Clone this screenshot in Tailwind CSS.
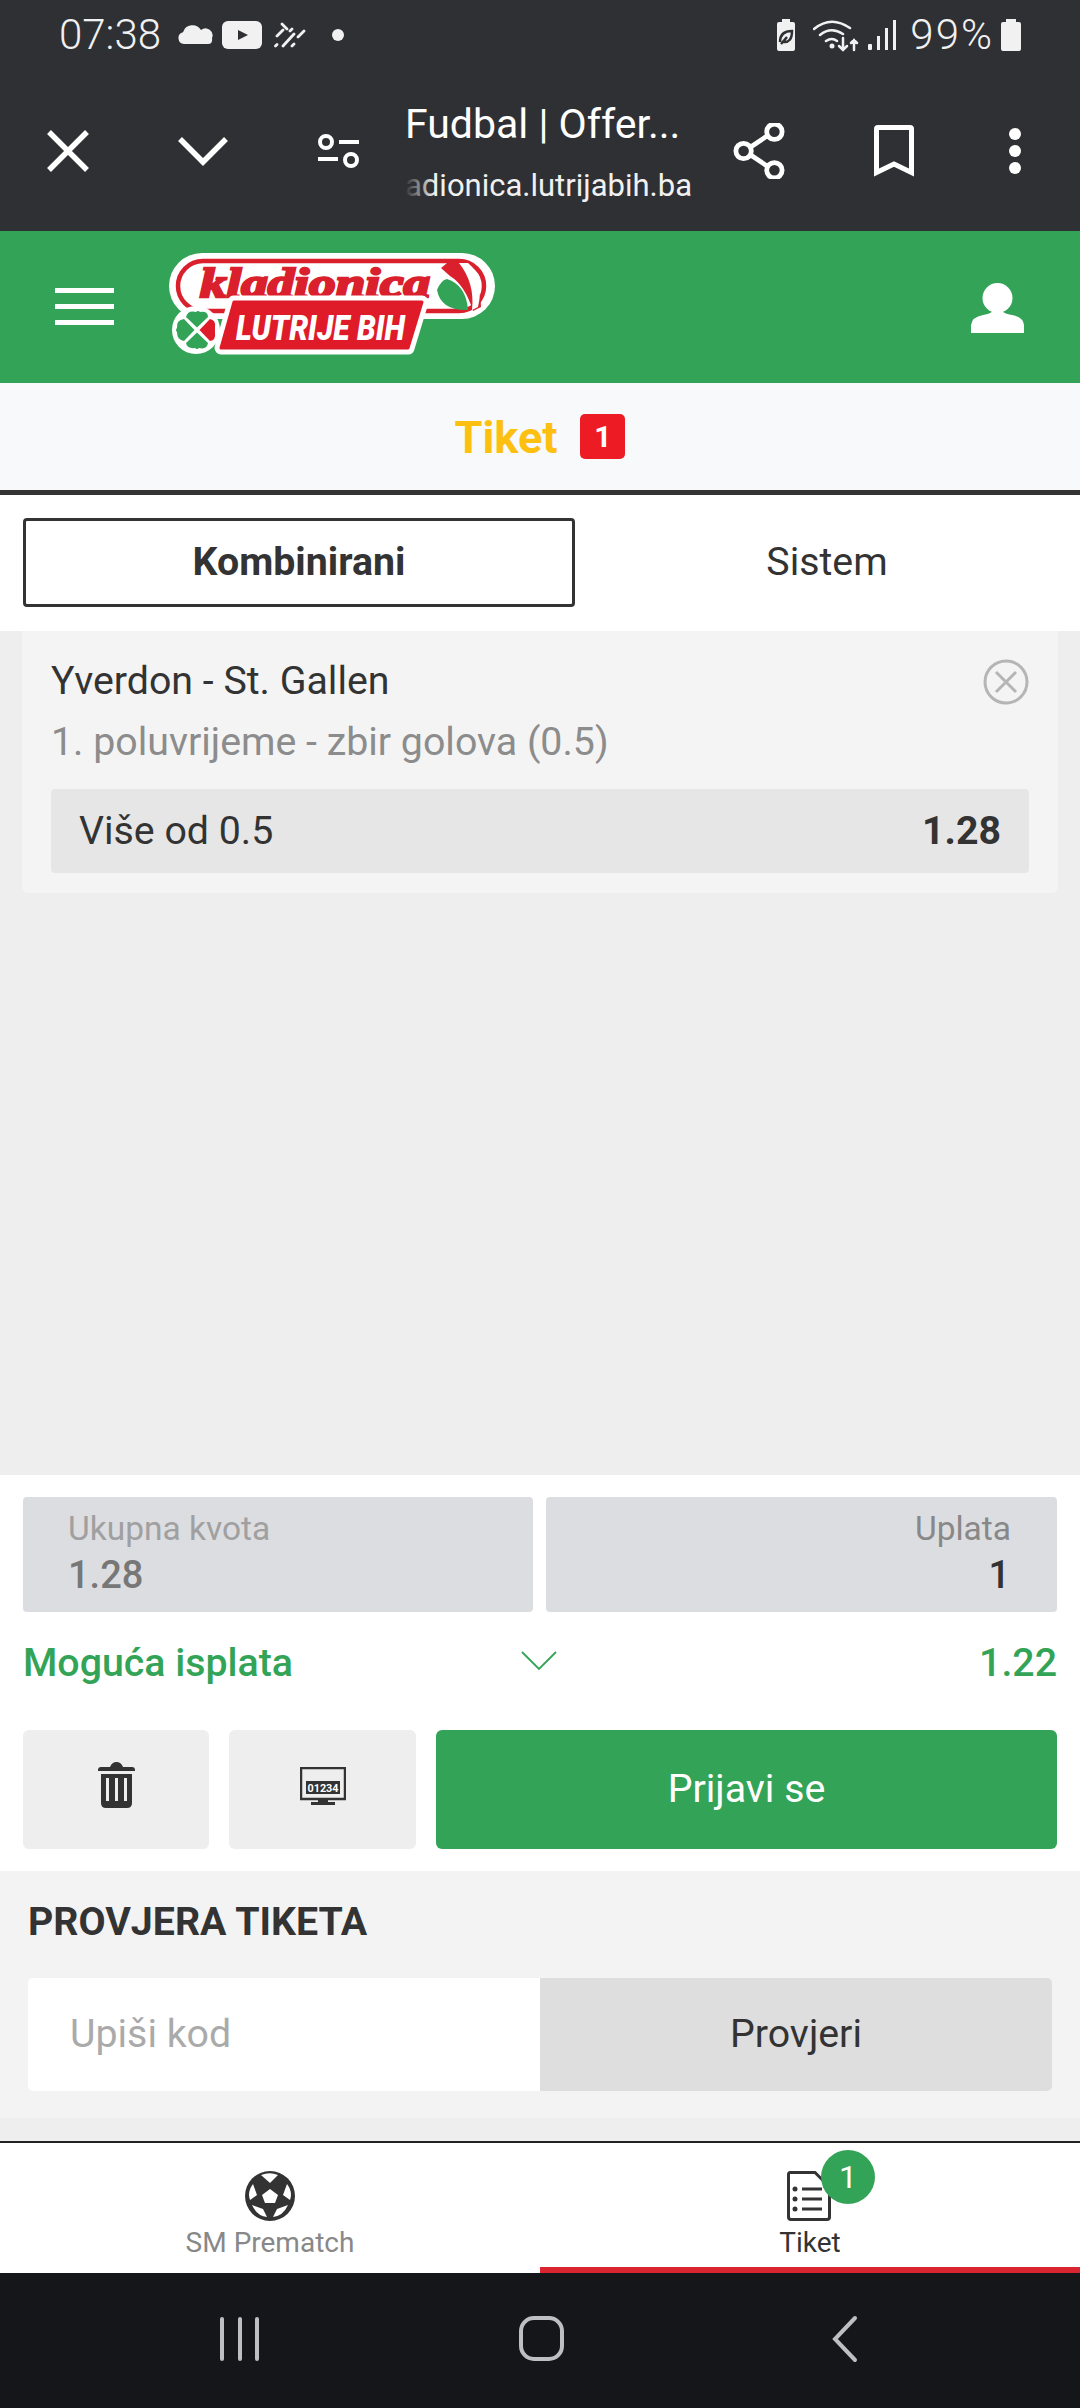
<!DOCTYPE html>
<html lang="en">
<head>
    <meta charset="UTF-8">
    <meta name="viewport" content="width=device-width, initial-scale=1.0">
    <title>Tiket - Kladionica Lutrije BiH</title>
    <script src="https://cdn.jsdelivr.net/npm/@tailwindcss/browser@4"></script>
</head>
<body class="bg-white">
<div class="w-[1080px] h-[2408px] flex flex-col overflow-hidden font-[Roboto,sans-serif] text-[39.3px] text-[#333]">

    <!-- Browser chrome -->
    <div class="h-[231px] bg-[#2f3034] text-white flex flex-col shrink-0">
        <!-- Status bar -->
        <div class="h-[70px] flex items-center pl-[59px] pr-[58px] text-[#f1f1f1] text-[42px]">
            <span class="w-[104px] font-light leading-none">07:38</span>
            <svg class="w-[38px] h-[22px] ml-[13px]" viewBox="0 0 38 22" fill="#f1f1f1"><path d="M8 20a6 6 0 0 1-1-11.800A10 10 0 0 1 25 6a7 7 0 0 1 11 8q1 6-4 6z"/></svg>
            <svg class="w-[40px] h-[28px] ml-[8px]" viewBox="0 0 40 28"><rect width="40" height="28" rx="6" fill="#f1f1f1"/><path d="M16 9l10 5-10 5z" fill="#2f3034"/></svg>
            <svg class="w-[32px] h-[26px] ml-[12px]" viewBox="0 0 32 26" fill="none" stroke="#f1f1f1" stroke-width="2.800" stroke-linecap="round"><path d="M8 2l5 5M3 14l6-6M1.500 24l1.500-1.500M9 24l11-12M18 24l2-2M24 15l6-6M16 9l2-2"/></svg>
            <span class="w-[12px] h-[12px] rounded-full bg-[#f1f1f1] ml-[26px]"></span>
            <div class="flex-1"></div>
            <svg class="w-[22px] h-[32px]" viewBox="0 0 22 32"><path d="M2 5a2 2 0 0 1 2-2h3V0h8v3h3a2 2 0 0 1 2 2v25a2 2 0 0 1-2 2H4a2 2 0 0 1-2-2z" fill="#f1f1f1"/><path d="M5 23q0-11 12-11 0 12-9 11M6 25l6-7" fill="none" stroke="#2f3034" stroke-width="2.500"/></svg>
            <svg class="w-[46px] h-[34px] ml-[16px]" viewBox="0 0 46 34" fill="none" stroke="#f1f1f1" stroke-width="2.500" stroke-linecap="round"><path d="M1 11q17-14 36-1M7 17q11-9 23-1M13 23q6-4 11 0"/><circle cx="19" cy="28" r="2.500" fill="#f1f1f1" stroke="none"/><path d="M30 20v12M26 28l4 4 4-4M41 32v-10M38 25l3-3 3 3"/></svg>
            <svg class="w-[28px] h-[30px] ml-[9px]" viewBox="0 0 28 30" fill="#f1f1f1"><rect x="0" y="24" width="4" height="6" rx="1"/><rect x="9" y="16" width="3" height="14"/><rect x="17" y="8" width="3" height="22"/><rect x="25" y="0" width="3" height="30"/></svg>
            <span class="ml-[14px] font-light leading-none tracking-[2px]">99%</span>
            <svg class="w-[22px] h-[32px] ml-[6px]" viewBox="0 0 22 32"><path d="M1 5a2 2 0 0 1 2-2h3V0h10v3h3a2 2 0 0 1 2 2v25a2 2 0 0 1-2 2H3a2 2 0 0 1-2-2z" fill="#f1f1f1"/></svg>
        </div>
        <!-- Custom tab toolbar -->
        <div class="flex-1 flex items-center">
            <div class="w-[135px] flex justify-center">
                <svg class="w-[42px] h-[42px]" viewBox="0 0 42 42" stroke="#fff" stroke-width="5.500"><path d="M2 2l38 38M40 2L2 40"/></svg>
            </div>
            <div class="w-[135px] flex justify-center">
                <svg class="w-[50px] h-[30px]" viewBox="0 0 50 30" fill="none" stroke="#fff" stroke-width="5.500"><path d="M2 3l23 23L48 3"/></svg>
            </div>
            <div class="w-[135px] flex justify-center">
                <svg class="w-[44px] h-[36px]" viewBox="0 0 44 36" fill="none" stroke="#fff" stroke-width="4"><circle cx="10" cy="9" r="6"/><path d="M23 9h20M2 26h20"/><circle cx="35" cy="27" r="6"/></svg>
            </div>
            <div class="w-[287px] flex flex-col relative">
                <span class="text-[41px] leading-[56px] text-white whitespace-nowrap">Fudbal | Offer...</span>
                <span class="text-[31px] leading-[40px] mt-[14px] text-[#f1f1f1] whitespace-nowrap">adionica.lutrijabih.ba</span>
                <span class="absolute left-0 bottom-0 w-[30px] h-[40px] bg-gradient-to-r from-[#2f3034] to-transparent"></span>
            </div>
            <div class="w-[135px] flex justify-center">
                <svg class="w-[52px] h-[56px] -ml-[2px]" viewBox="0 0 54 58" fill="none" stroke="#fff" stroke-width="5"><circle cx="11" cy="29" r="8"/><circle cx="43" cy="9" r="8"/><circle cx="43" cy="49" r="8"/><path d="M18 25l18-12M18 33l18 12"/></svg>
            </div>
            <div class="w-[135px] flex justify-center">
                <svg class="w-[40px] h-[52px] -ml-[2px]" viewBox="0 0 40 52" fill="none" stroke="#fff" stroke-width="5"><path d="M2.500 47.500V4a1.500 1.500 0 0 1 1.500-1.500h32a1.500 1.500 0 0 1 1.500 1.500v43.500L20 39z"/></svg>
            </div>
            <div class="w-[108px] flex justify-center">
                <svg class="w-[12px] h-[46px] -ml-[2px]" viewBox="0 0 12 46" fill="#fff"><circle cx="6" cy="6" r="6"/><circle cx="6" cy="23" r="6"/><circle cx="6" cy="40" r="6"/></svg>
            </div>
        </div>
    </div>

    <!-- Site header -->
    <div class="h-[152px] bg-[#33a457] flex shrink-0 relative">
        <div class="ml-[55px] mt-[57px] w-[59px] h-[37px] flex flex-col justify-between">
            <span class="h-[5px] bg-white"></span>
            <span class="h-[5px] bg-white"></span>
            <span class="h-[5px] bg-white"></span>
        </div>
        <svg class="ml-[55px] mt-[22px] w-[326px] h-[104px]" viewBox="0 0 326 104">
            <rect x="0" y="0" width="326" height="66" rx="33" fill="#fff"/>
            <rect x="9" y="8" width="306" height="50" rx="25" fill="#fff" stroke="#d9202c" stroke-width="4.500"/>
            <path d="M272 15L283 6Q312 20 312 54L304 58Q296 32 281 23z" fill="#d9202c"/>
            <path d="M299 10Q316 24 309 54L303 57Q306 30 290 10z" fill="#fff"/>
            <path d="M268 37Q272 27 278 26Q297 32 299 57Q272 58 268 37z" fill="#33a457"/>
            <text x="31" y="44" textLength="230" lengthAdjust="spacingAndGlyphs" font-family="Liberation Serif" font-weight="700" font-style="italic" font-size="42" fill="#d9202c" stroke="#d9202c" stroke-width="2.400">kladionica</text>
            <circle cx="27" cy="77" r="24" fill="#fff"/>
            <path d="M65 49H253L239 95H52z" fill="#e01b29" stroke="#fff" stroke-width="13" stroke-linejoin="round"/>
            <path d="M65 49H253L239 95H52z" fill="#e01b29" stroke="#e01b29" stroke-width="3" stroke-linejoin="round"/>
            <text x="67" y="87" textLength="169" lengthAdjust="spacingAndGlyphs" font-family="Roboto" font-weight="900" font-style="italic" font-size="35" fill="#fff">LUTRIJE BIH</text>
            <g fill="#33a457">
                <path d="M25.500 77L15 66Q7 67 8 75Q6 77 8 79Q8 87 15 88z"/>
                <path d="M28 74.500L17 64Q19 57 27 59Q29 57 31 59Q39 58 39 64z"/>
                <path d="M28 79.500L39 90Q38 97 30 95Q28 97 26 95Q18 96 17 90z"/>
            </g>
            <path d="M30.500 77L41 66Q47 67 46 74Q46 77 46 80Q47 87 41 88z" fill="#e01b29"/>
        </svg>
        <div class="flex-1"></div>
        <svg class="mt-[52px] mr-[56px] w-[53px] h-[50px]" viewBox="0 0 53 50" fill="#fff"><circle cx="26.500" cy="15" r="15"/><path d="M0 50v-8q1-8 12-10 8-1 11-5h7q3 4 11 5 11 2 12 10v8z"/></svg>
    </div>

    <!-- Ticket title -->
    <div class="h-[107px] bg-[#f7f9fb] flex items-center justify-center shrink-0 pt-[2px]">
        <span class="text-[45px] font-bold text-[#fdc010] mr-[23px] leading-none">Tiket</span>
        <span class="w-[45px] h-[45px] rounded-[5px] bg-[#ed1c24] text-white text-[30px] font-bold flex items-center justify-center leading-none -mt-[2px]">1</span>
    </div>
    <div class="h-[5px] bg-[#333] shrink-0"></div>

    <!-- Tabs -->
    <div class="h-[136px] bg-white flex pl-[23px] pt-[23px] pr-[23px] shrink-0">
        <div class="w-[552px] h-[89px] border-[3px] border-[#333] rounded-[4px] font-bold flex items-center justify-center">Kombinirani</div>
        <div class="flex-1 h-[89px] pl-[22px] flex items-center justify-center">Sistem</div>
    </div>

    <!-- Selections -->
    <div class="h-[844px] bg-[#eeeeee] px-[22px] shrink-0">
        <div class="h-[262px] bg-[#f4f4f4] rounded-b-[6px] px-[29px]">
            <div class="h-[94px] flex items-center justify-between pt-[8px]">
                <span class="leading-none">Yverdon - St. Gallen</span>
                <svg class="w-[46px] h-[46px]" viewBox="0 0 46 46" fill="none" stroke="#b5b5b5" stroke-width="3"><circle cx="23" cy="23" r="21"/><path d="M13 13l20 20M33 13L13 33"/></svg>
            </div>
            <div class="h-[64px] pb-[28px] text-[#8c8c8c] flex items-center leading-none">1. poluvrijeme - zbir golova (0.5)</div>
            <div class="h-[84px] bg-[#e6e6e6] rounded-[4px] flex items-center justify-between px-[28px]">
                <span>Više od 0.5</span>
                <span class="font-bold">1.28</span>
            </div>
        </div>
    </div>

    <!-- Totals and actions -->
    <div class="h-[396px] bg-white px-[23px] pt-[22px] shrink-0">
        <div class="flex gap-[13px]">
            <div class="w-[510px] h-[115px] bg-[#dcdde0] rounded-[4px] pl-[45px] pt-[13px] flex flex-col">
                <span class="text-[33.500px] leading-[38px] text-[#a0a0a0]">Ukupna kvota</span>
                <span class="text-[38px] leading-[48px] mt-[3px] text-[#777] font-medium">1.28</span>
            </div>
            <div class="flex-1 h-[115px] bg-[#dcdde0] rounded-[4px] pr-[46px] pt-[13px] flex flex-col items-end">
                <span class="text-[33.500px] leading-[38px] text-[#888]">Uplata</span>
                <span class="text-[38px] leading-[48px] mt-[3px] text-[#333] font-medium pr-[1px]">1</span>
            </div>
        </div>
        <div class="h-[102px] flex items-center text-[#33a457] font-medium">
            <span class="w-[498px]">Moguća isplata</span>
            <svg class="w-[36px] h-[20px] -mt-[4px]" viewBox="0 0 36 20" fill="none" stroke="#33a457" stroke-width="1.800"><path d="M1 1l17 17L35 1"/></svg>
            <span class="flex-1 text-right">1.22</span>
        </div>
        <div class="h-[119px] mt-[16px] flex gap-[20px]">
            <div class="w-[186px] bg-[#eeeeee] rounded-[6px] flex items-center justify-center">
                <svg class="w-[37px] h-[46px] -mt-[10px]" viewBox="0 0 37 46" fill="#333"><path d="M0 8q0-3 3-3h9q2-5 6.500-5t6.500 5h9q3 0 3 3v1H0z"/><path fill-rule="evenodd" d="M3 12h31v29q0 5-5 5H8q-5 0-5-5zM8 16v23h3V16zM17 16v23h3V16zM26 16v23h3V16z"/></svg>
            </div>
            <div class="w-[187px] bg-[#eeeeee] rounded-[6px] flex items-center justify-center">
                <svg class="w-[46px] h-[38px] -mt-[8px]" viewBox="0 0 46 38"><rect x="1" y="1" width="44" height="31" fill="none" stroke="#333" stroke-width="2.500"/><rect x="6" y="14" width="34" height="13" fill="#333"/><text x="23" y="24.500" text-anchor="middle" textLength="31" lengthAdjust="spacingAndGlyphs" font-family="Roboto" font-weight="700" font-size="11" fill="#fff">01234</text><path d="M18 32h10v3h7v3H11v-3h7z" fill="#333"/></svg>
            </div>
            <div class="flex-1 bg-[#33a457] rounded-[6px] text-white flex items-center justify-center">Prijavi se</div>
        </div>
    </div>

    <!-- Ticket check -->
    <div class="h-[247px] bg-[#f3f3f3] pl-[28px] pr-[28px] shrink-0">
        <div class="h-[107px] pb-[4px] flex items-center font-bold">PROVJERA TIKETA</div>
        <div class="flex h-[113px]">
            <div class="w-[512px] bg-white rounded-l-[5px] pl-[42px] flex items-center text-[#aaaaaa]">Upiši kod</div>
            <div class="flex-1 bg-[#dedede] rounded-r-[5px] flex items-center justify-center">Provjeri</div>
        </div>
    </div>
    <div class="h-[23px] bg-[#eeeeee] shrink-0"></div>
    <div class="h-[2px] bg-[#222] shrink-0"></div>

    <!-- Bottom tabs -->
    <div class="h-[130px] bg-white flex shrink-0 text-[28px]">
        <div class="w-[540px] h-full flex flex-col items-center pt-[28px] text-[#888]">
            <svg class="w-[50px] h-[50px]" viewBox="0 0 50 50">
                <circle cx="25" cy="25" r="25" fill="#333"/>
                <path d="M25 18l8 6-3 8H20l-3-8zM16 4q9-3.500 17 0l-8 8zM8 13l4 11-7 5q-3-8 3-16zM42 13l-4 11 7 5q3-8-3-16zM7 34l11 4 4 8q-10-1-15-12zM43 34l-11 4-4 8q10-1 15-12z" fill="#fff"/>
            </svg>
            <span class="leading-[44px]">SM Prematch</span>
        </div>
        <div class="w-[540px] h-full flex flex-col items-center pt-[28px] text-[#333] border-b-[6px] border-[#d9252f] relative">
            <svg class="w-[44px] h-[50px] mr-[3px]" viewBox="0 0 44 50" fill="none" stroke="#333" stroke-width="3"><path d="M3 1.500H28L42.500 16V46a2.500 2.500 0 0 1-2.500 2.500H4A2.500 2.500 0 0 1 1.500 46V3A1.500 1.500 0 0 1 3 1.500z"/><path d="M15 18h20M15 28h20M15 38h20"/><circle cx="8" cy="18" r="2.500" fill="#333" stroke="none"/><circle cx="8" cy="28" r="2.500" fill="#333" stroke="none"/><circle cx="8" cy="38" r="2.500" fill="#333" stroke="none"/></svg>
            <span class="leading-[44px]">Tiket</span>
            <span class="absolute left-[281px] top-[7px] w-[54px] h-[54px] rounded-full bg-[#33a457] text-white text-[32px] flex items-center justify-center leading-none">1</span>
        </div>
    </div>

    <!-- Android nav bar -->
    <div class="flex-1 bg-[#14161a] relative">
        <svg class="absolute left-0 top-0 w-[1080px] h-[135px]" viewBox="0 0 1080 135" fill="none" stroke="#bdbfc2" stroke-width="4" stroke-linecap="round">
            <path d="M222 46v40M240 46v40M257 46v40"/>
            <rect x="521" y="45" width="41" height="41" rx="13"/>
            <path d="M855 45L835 66l20 21"/>
        </svg>
    </div>
</div>
</body>
</html>
